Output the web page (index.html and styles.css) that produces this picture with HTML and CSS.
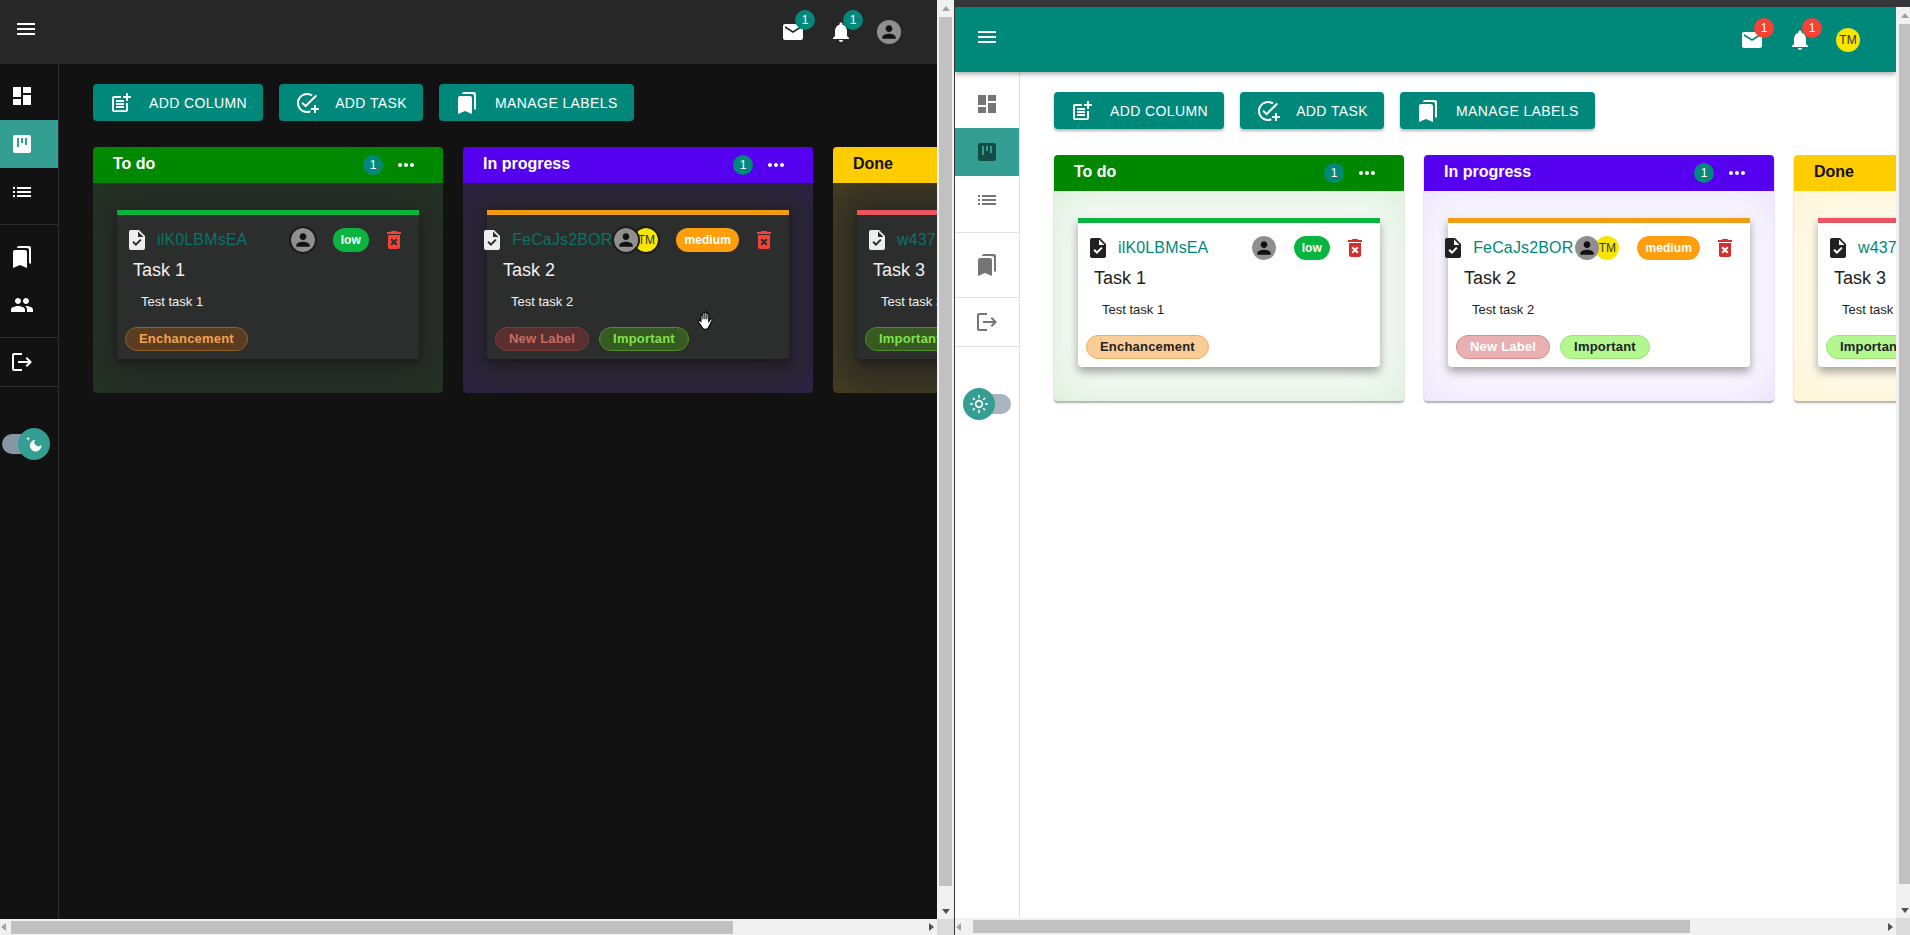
FILE: index.html
```html
<!DOCTYPE html>
<html lang="en">
<head>
<meta charset="utf-8">
<title>Kanban board</title>
<link rel="stylesheet" href="styles.css">
</head>
<body>
<svg class="defs" aria-hidden="true">
  <symbol id="i-menu" viewBox="0 0 24 24"><path d="M3 18h18v-2H3v2zm0-5h18v-2H3v2zm0-7v2h18V6H3z"/></symbol>
  <symbol id="i-dash" viewBox="0 0 24 24"><path d="M3 13h8V3H3v10zm0 8h8v-6H3v6zm10 0h8V11h-8v10zm0-18v6h8V3h-8z"/></symbol>
  <symbol id="i-kanban" viewBox="0 0 24 24"><path fill-rule="evenodd" d="M5 3h14a2 2 0 0 1 2 2v14a2 2 0 0 1-2 2H5a2 2 0 0 1-2-2V5a2 2 0 0 1 2-2zm2 3v9h2V6H7zm4 0v5h2V6h-2zm4 0v7h2V6h-2z"/></symbol>
  <symbol id="i-list" viewBox="0 0 24 24"><path d="M3 13h2v-2H3v2zm0 4h2v-2H3v2zm0-8h2V7H3v2zm4 4h14v-2H7v2zm0 4h14v-2H7v2zM7 7v2h14V7H7z"/></symbol>
  <symbol id="i-books" viewBox="0 0 24 24"><path d="M19 18l2 1V3c0-1.1-.9-2-2-2H8.99C7.89 1 7 1.9 7 3h10c1.1 0 2 .9 2 2v13zM15 5H5c-1.1 0-2 .9-2 2v16l7-3 7 3V7c0-1.1-.9-2-2-2z"/></symbol>
  <symbol id="i-people" viewBox="0 0 24 24"><path d="M16 11c1.66 0 2.99-1.34 2.99-3S17.66 5 16 5c-1.66 0-3 1.34-3 3s1.34 3 3 3zm-8 0c1.66 0 2.99-1.34 2.99-3S9.66 5 8 5C6.34 5 5 6.34 5 8s1.34 3 3 3zm0 2c-2.33 0-7 1.17-7 3.5V19h14v-2.5c0-2.33-4.67-3.5-7-3.5zm8 0c-.29 0-.62.02-.97.05 1.16.84 1.97 1.97 1.97 3.45V19h6v-2.5c0-2.33-4.67-3.5-7-3.5z"/></symbol>
  <symbol id="i-logout" viewBox="0 0 24 24"><path d="M17 7l-1.41 1.41L18.17 11H8v2h10.17l-2.58 2.58L17 17l5-5zM4 5h8V3H4c-1.1 0-2 .9-2 2v14c0 1.1.9 2 2 2h8v-2H4V5z"/></symbol>
  <symbol id="i-postadd" viewBox="0 0 24 24"><path d="M17 19.22H5V7h7V5H5c-1.1 0-2 .9-2 2v12c0 1.1.9 2 2 2h12c1.1 0 2-.9 2-2v-7h-2v7.22zM19 2h-2v3h-3v2h3v3h2V7h3V5h-3V2zM7 9h8v2H7zM7 12h8v2H7zM7 15h8v2H7z"/></symbol>
  <symbol id="i-addtask" viewBox="0 0 24 24"><path d="M22 5.18 10.59 16.6l-4.24-4.24 1.41-1.41 2.83 2.83 10-10L22 5.18zM12 20c-4.42 0-8-3.58-8-8s3.58-8 8-8c1.58 0 3.04.46 4.28 1.25l1.44-1.44C16.1 2.67 14.13 2 12 2 6.48 2 2 6.48 2 12s4.48 10 10 10c1.18 0 2.32-.21 3.37-.58v-2.13c-1.03.45-2.17.71-3.37.71zM21 14h-2v3h-3v2h3v3h2v-3h3v-2h-3v-3z"/></symbol>
  <symbol id="i-more" viewBox="0 0 24 24"><path d="M6 10c-1.1 0-2 .9-2 2s.9 2 2 2 2-.9 2-2-.9-2-2-2zm12 0c-1.1 0-2 .9-2 2s.9 2 2 2 2-.9 2-2-.9-2-2-2zm-6 0c-1.1 0-2 .9-2 2s.9 2 2 2 2-.9 2-2-.9-2-2-2z"/></symbol>
  <symbol id="i-mail" viewBox="0 0 24 24"><path fill-rule="evenodd" d="M4 4h16c1.1 0 2 .9 2 2v12c0 1.1-.9 2-2 2H4c-1.1 0-2-.9-2-2V6c0-1.1.9-2 2-2zm16 4V6l-8 5-8-5v2l8 5 8-5z"/></symbol>
  <symbol id="i-bell" viewBox="0 0 24 24"><path d="M12 22c1.1 0 2-.9 2-2h-4c0 1.1.89 2 2 2zm6-6v-5c0-3.07-1.64-5.64-4.5-6.32V4c0-.83-.67-1.5-1.5-1.5s-1.5.67-1.5 1.5v.68C7.63 5.36 6 7.92 6 11v5l-2 2v1h16v-1l-2-2z"/></symbol>
  <symbol id="i-person" viewBox="0 0 24 24"><path d="M12 12c2.21 0 4-1.79 4-4s-1.79-4-4-4-4 1.79-4 4 1.79 4 4 4zm0 2c-2.67 0-8 1.34-8 4v2h16v-2c0-2.66-5.33-4-8-4z"/></symbol>
  <symbol id="i-trash" viewBox="0 0 24 24"><path d="M6 19c0 1.1.9 2 2 2h8c1.1 0 2-.9 2-2V7H6v12zm2.46-7.12l1.41-1.41L12 12.59l2.12-2.12 1.41 1.41L13.41 14l2.12 2.12-1.41 1.41L12 15.41l-2.12 2.12-1.41-1.41L10.59 14l-2.13-2.12zM15.5 4l-1-1h-5l-1 1H5v2h14V4z"/></symbol>
  <symbol id="i-task" viewBox="0 0 24 24"><path d="M14 2H6c-1.1 0-1.99.9-1.99 2L4 20c0 1.1.89 2 1.99 2H18c1.1 0 2-.9 2-2V8l-6-6zm-3.06 16L7.4 14.46l1.41-1.41 2.12 2.12 4.24-4.24 1.41 1.41L10.94 18zM13 9V3.5L18.5 9H13z"/></symbol>
  <symbol id="i-moon" viewBox="0 0 24 24"><path d="M13.5 7a7 7 0 1 0 7.4 5.8 4.7 4.7 0 0 1-7.4-5.8zM5 3l.7 2 2 .7-2 .7-.7 2-.7-2-2-.7 2-.7z"/></symbol>
  <symbol id="i-sun" viewBox="0 0 24 24"><path d="M12 9c1.65 0 3 1.35 3 3s-1.35 3-3 3-3-1.35-3-3 1.35-3 3-3m0-2c-2.76 0-5 2.24-5 5s2.24 5 5 5 5-2.24 5-5-2.24-5-5-5zM2 13h2c.55 0 1-.45 1-1s-.45-1-1-1H2c-.55 0-1 .45-1 1s.45 1 1 1zm18 0h2c.55 0 1-.45 1-1s-.45-1-1-1h-2c-.55 0-1 .45-1 1s.45 1 1 1zM11 2v2c0 .55.45 1 1 1s1-.45 1-1V2c0-.55-.45-1-1-1s-1 .45-1 1zm0 18v2c0 .55.45 1 1 1s1-.45 1-1v-2c0-.55-.45-1-1-1s-1 .45-1 1zM5.99 4.58a.996.996 0 0 0-1.41 0 .996.996 0 0 0 0 1.41l1.06 1.06c.39.39 1.03.39 1.41 0s.39-1.03 0-1.41L5.99 4.58zm12.37 12.37a.996.996 0 0 0-1.41 0 .996.996 0 0 0 0 1.41l1.06 1.06c.39.39 1.03.39 1.41 0a.996.996 0 0 0 0-1.41l-1.06-1.06zm1.06-10.96a.996.996 0 0 0 0-1.41.996.996 0 0 0-1.41 0l-1.06 1.06c-.39.39-.39 1.03 0 1.41s1.03.39 1.41 0l1.06-1.06zM7.05 18.36a.996.996 0 0 0 0-1.41.996.996 0 0 0-1.41 0l-1.06 1.06c-.39.39-.39 1.03 0 1.41s1.03.39 1.41 0l1.06-1.06z"/></symbol>
</svg>

<div class="desktop">

  <section class="pane dark">
    <div class="window">
      <header class="appbar">
        <button class="hamburger"><svg class="icon"><use href="#i-menu"/></svg></button>
        <div class="actions">
          <span class="action"><svg class="icon"><use href="#i-mail"/></svg><b class="notif">1</b></span>
          <span class="action"><svg class="icon"><use href="#i-bell"/></svg><b class="notif">1</b></span>
          <span class="action"><span class="disc grey"><svg class="icon"><use href="#i-person"/></svg></span></span>
        </div>
      </header>
      <div class="body">
        <nav class="side">
          <a class="nav"><svg class="icon"><use href="#i-dash"/></svg></a>
          <a class="nav on"><svg class="icon"><use href="#i-kanban"/></svg></a>
          <a class="nav"><svg class="icon"><use href="#i-list"/></svg></a>
          <hr class="rule spaced">
          <a class="nav"><svg class="icon"><use href="#i-books"/></svg></a>
          <a class="nav"><svg class="icon"><use href="#i-people"/></svg></a>
          <hr class="rule after">
          <a class="nav"><svg class="icon"><use href="#i-logout"/></svg></a>
          <hr class="rule">
          <div class="toggle"><span class="knob"><svg class="icon"><use href="#i-moon"/></svg></span></div>
        </nav>
        <main class="main">
          <div class="toolbar">
            <button class="btn"><svg class="icon"><use href="#i-postadd"/></svg>ADD COLUMN</button>
            <button class="btn"><svg class="icon"><use href="#i-addtask"/></svg>ADD TASK</button>
            <button class="btn"><svg class="icon"><use href="#i-books"/></svg>MANAGE LABELS</button>
          </div>
          <div class="board">
            <article class="col green">
              <div class="col-head"><h3>To do</h3><span class="count">1</span><svg class="icon"><use href="#i-more"/></svg></div>
              <div class="col-body">
                <div class="card bar-green">
                  <div class="row">
                    <div class="code"><svg class="icon"><use href="#i-task"/></svg><span>ilK0LBMsEA</span></div>
                    <div class="people"><span class="disc grey ring"><svg class="icon"><use href="#i-person"/></svg></span></div>
                    <span class="prio low">low</span>
                    <svg class="icon trash"><use href="#i-trash"/></svg>
                  </div>
                  <h4>Task 1</h4>
                  <p>Test task 1</p>
                  <div class="labels"><span class="chip orange">Enchancement</span></div>
                </div>
              </div>
            </article>
            <article class="col purple">
              <div class="col-head"><h3>In progress</h3><span class="count">1</span><svg class="icon"><use href="#i-more"/></svg></div>
              <div class="col-body">
                <div class="card bar-orange">
                  <div class="row">
                    <div class="code"><svg class="icon"><use href="#i-task"/></svg><span>FeCaJs2BOR</span></div>
                    <div class="people"><span class="disc grey ring"><svg class="icon"><use href="#i-person"/></svg></span><span class="disc yellow ring">TM</span></div>
                    <span class="prio medium">medium</span>
                    <svg class="icon trash"><use href="#i-trash"/></svg>
                  </div>
                  <h4>Task 2</h4>
                  <p>Test task 2</p>
                  <div class="labels"><span class="chip red">New Label</span><span class="chip lime">Important</span></div>
                  <svg class="cursor" viewBox="0 0 16 18"><path d="M3.5 9.5V4.2c0-1.2 1.7-1.2 1.7 0V7.5V2.2c0-1.2 1.8-1.2 1.8 0V7.5V1.7c0-1.2 1.8-1.2 1.8 0V7.5V3c0-1.2 1.7-1.2 1.7 0v6.5l1.4-2c.8-1 2.2-.2 1.6.9l-2.7 5.6c-.6 1.3-1.4 2.5-2.8 2.5H7.2c-1.5 0-2.4-1-3-2.2L1.1 9.8c-.5-1 .8-1.8 1.5-.9z"/></svg>
                </div>
              </div>
            </article>
            <article class="col amber">
              <div class="col-head"><h3>Done</h3><span class="count">1</span><svg class="icon"><use href="#i-more"/></svg></div>
              <div class="col-body">
                <div class="card bar-red">
                  <div class="row">
                    <div class="code"><svg class="icon"><use href="#i-task"/></svg><span>w437</span></div>
                  </div>
                  <h4>Task 3</h4>
                  <p>Test task 3</p>
                  <div class="labels"><span class="chip lime">Important</span></div>
                </div>
              </div>
            </article>
          </div>
        </main>
      </div>
    </div>
    <div class="vbar"><i class="arrow up"></i><i class="vthumb"></i><i class="arrow down"></i></div>
    <div class="hbar"><i class="arrow left"></i><i class="hthumb"></i><i class="arrow right"></i></div>
    <div class="corner"></div>
  </section>

  <section class="pane light">
    <div class="window">
      <header class="appbar">
        <button class="hamburger"><svg class="icon"><use href="#i-menu"/></svg></button>
        <div class="actions">
          <span class="action"><svg class="icon"><use href="#i-mail"/></svg><b class="notif">1</b></span>
          <span class="action"><svg class="icon"><use href="#i-bell"/></svg><b class="notif">1</b></span>
          <span class="action"><span class="disc yellow">TM</span></span>
        </div>
      </header>
      <div class="body">
        <nav class="side">
          <a class="nav"><svg class="icon"><use href="#i-dash"/></svg></a>
          <a class="nav on"><svg class="icon"><use href="#i-kanban"/></svg></a>
          <a class="nav"><svg class="icon"><use href="#i-list"/></svg></a>
          <hr class="rule spaced">
          <a class="nav"><svg class="icon"><use href="#i-books"/></svg></a>
          <hr class="rule after">
          <a class="nav"><svg class="icon"><use href="#i-logout"/></svg></a>
          <hr class="rule">
          <div class="toggle"><span class="knob"><svg class="icon"><use href="#i-sun"/></svg></span></div>
        </nav>
        <main class="main">
          <div class="toolbar">
            <button class="btn"><svg class="icon"><use href="#i-postadd"/></svg>ADD COLUMN</button>
            <button class="btn"><svg class="icon"><use href="#i-addtask"/></svg>ADD TASK</button>
            <button class="btn"><svg class="icon"><use href="#i-books"/></svg>MANAGE LABELS</button>
          </div>
          <div class="board">
            <article class="col green">
              <div class="col-head"><h3>To do</h3><span class="count">1</span><svg class="icon"><use href="#i-more"/></svg></div>
              <div class="col-body">
                <div class="card bar-green">
                  <div class="row">
                    <div class="code"><svg class="icon"><use href="#i-task"/></svg><span>ilK0LBMsEA</span></div>
                    <div class="people"><span class="disc grey ring"><svg class="icon"><use href="#i-person"/></svg></span></div>
                    <span class="prio low">low</span>
                    <svg class="icon trash"><use href="#i-trash"/></svg>
                  </div>
                  <h4>Task 1</h4>
                  <p>Test task 1</p>
                  <div class="labels"><span class="chip orange">Enchancement</span></div>
                </div>
              </div>
            </article>
            <article class="col purple">
              <div class="col-head"><h3>In progress</h3><span class="count">1</span><svg class="icon"><use href="#i-more"/></svg></div>
              <div class="col-body">
                <div class="card bar-orange">
                  <div class="row">
                    <div class="code"><svg class="icon"><use href="#i-task"/></svg><span>FeCaJs2BOR</span></div>
                    <div class="people"><span class="disc grey ring"><svg class="icon"><use href="#i-person"/></svg></span><span class="disc yellow ring">TM</span></div>
                    <span class="prio medium">medium</span>
                    <svg class="icon trash"><use href="#i-trash"/></svg>
                  </div>
                  <h4>Task 2</h4>
                  <p>Test task 2</p>
                  <div class="labels"><span class="chip red">New Label</span><span class="chip lime">Important</span></div>
                </div>
              </div>
            </article>
            <article class="col amber">
              <div class="col-head"><h3>Done</h3><span class="count">1</span><svg class="icon"><use href="#i-more"/></svg></div>
              <div class="col-body">
                <div class="card bar-red">
                  <div class="row">
                    <div class="code"><svg class="icon"><use href="#i-task"/></svg><span>w437</span></div>
                  </div>
                  <h4>Task 3</h4>
                  <p>Test task 3</p>
                  <div class="labels"><span class="chip lime">Important</span></div>
                </div>
              </div>
            </article>
          </div>
        </main>
      </div>
    </div>
    <div class="vbar"><i class="arrow up"></i><i class="vthumb"></i><i class="arrow down"></i></div>
    <div class="hbar"><i class="arrow left"></i><i class="hthumb"></i><i class="arrow right"></i></div>
    <div class="corner"></div>
  </section>

</div>
</body>
</html>
```
FILE: styles.css
```css
* { box-sizing: border-box; }
html, body { margin: 0; height: 100%; overflow: hidden; }
body { font-family: "Liberation Sans", Arial, sans-serif; background: #35363a; }
.defs { display: none; }
.icon { width: 24px; height: 24px; fill: currentColor; flex: none; display: block; }

.desktop { display: grid; grid-template-columns: 954px 956px; height: 935px; }

/* a browser window: content plus scrollbars */
.pane { display: grid; min-width: 0; height: 935px; }
.pane.dark {
  grid-template-columns: 937px 17px; grid-template-rows: 919px 16px;
  --page: #121212; --bar: #272727; --bar-fg: #fff; --rule: #2e2e2e;
  --nav: #fff; --nav-on: #fff; --card: #2c2e2d; --title: #f0f0f0;
  --code: #0a7267; --file: #eee; --trash: #f44336; --ring: #1c1c1c;
  --badge: #00897b; --track: #8796a5; --col-base: #262826;
  --card-shadow: 0 4px 8px rgba(0,0,0,.35); --col-shadow: none; --bar-shadow: none;
  --btn-shadow: none;
  --chip-o-bg: #5a3c20; --chip-o-bd: #94601f; --chip-o-fg: #f2a24f;
  --chip-r-bg: #5a2f2f; --chip-r-bd: #7e3b3b; --chip-r-fg: #c96b65;
  --chip-l-bg: #375a22; --chip-l-bd: #4d8f20; --chip-l-fg: #7fe24a;
  --green-fill: transparent; --purple-fill: rgba(85,0,238,.03); --amber-fill: rgba(255,160,0,.02);
  --green-edge: rgba(0,136,0,.16); --purple-edge: rgba(85,0,238,.18); --amber-edge: rgba(255,190,0,.18);
}
.pane.light {
  grid-template-columns: 941px 15px; grid-template-rows: 918px 17px;
  border-left: 1px solid #35363a;
  --page: #fff; --bar: #00897b; --bar-fg: #fff; --rule: #e0e0e0;
  --nav: #757575; --nav-on: #154c46; --card: #fff; --title: #222;
  --code: #00897b; --file: #212121; --trash: #d32f2f; --ring: transparent;
  --badge: #f44336; --track: #aab4be; --col-base: #fff;
  --card-shadow: 0 5px 10px rgba(0,0,0,.35); --col-shadow: 0 2px 2px rgba(0,0,0,.32);
  --bar-shadow: 0 2px 5px rgba(0,0,0,.35);
  --btn-shadow: 0 2px 3px rgba(0,0,0,.3);
  --chip-o-bg: #f9cd95; --chip-o-bd: #efae63; --chip-o-fg: #222;
  --chip-r-bg: #e8b0b0; --chip-r-bd: #dc8a8a; --chip-r-fg: #fff;
  --chip-l-bg: #b3f78f; --chip-l-bd: #9fe27c; --chip-l-fg: #222;
  --green-fill: rgba(0,136,0,.03); --purple-fill: rgba(85,0,238,.025); --amber-fill: rgba(255,204,0,.07);
  --green-edge: rgba(0,136,0,.13); --purple-edge: rgba(85,0,238,.1); --amber-edge: rgba(255,204,0,.14);
}
.window { display: flex; flex-direction: column; overflow: hidden; background: var(--page); min-width: 0; }
.pane.light .window { padding-top: 7px; background-clip: content-box; }
.pane.light .vbar { margin-top: 7px; }

/* app bar */
.appbar {
  flex: none; height: 64px; display: flex; align-items: center; justify-content: space-between;
  background: var(--bar); color: var(--bar-fg); padding: 0 24px 0 14px;
  box-shadow: var(--bar-shadow); position: relative; z-index: 2;
}
.pane.light .appbar { height: 65px; padding-left: 20px; }
.hamburger { width: 24px; height: 24px; padding: 0; border: 0; background: none; color: inherit; margin-top: -6px; }
.actions { display: flex; }
.action { width: 48px; height: 24px; position: relative; display: flex; justify-content: center; }
.pane.light .action { margin-top: 1px; }
.notif {
  position: absolute; left: 26px; top: -10px; width: 20px; height: 20px; border-radius: 50%;
  background: var(--badge); color: #fff; font-size: 12px; font-weight: 400; line-height: 20px; text-align: center;
}
.disc {
  width: 24px; height: 24px; border-radius: 50%; display: flex; align-items: center; justify-content: center;
  font-size: 12px; color: #333; flex: none; overflow: hidden;
}
.disc .icon { width: 20px; height: 20px; }
.disc.grey { background: #8f8f8f; color: #111; }
.disc.yellow { background: #f7e700; }
.disc.ring { width: 28px; height: 28px; border: 2px solid var(--ring); background-clip: padding-box; }

/* side nav */
.body { flex: 1; display: flex; min-height: 0; }
.side { flex: none; width: 59px; border-right: 1px solid var(--rule); padding-top: 8px; color: var(--nav); }
.pane.light .side { width: 65px; }
.nav { height: 48px; display: flex; align-items: center; padding-left: 10px; }
.pane.light .nav { padding-left: 20px; }
.nav.on { background: #349e93; color: var(--nav-on); }
.rule { border: 0; height: 1px; background: var(--rule); margin: 0; }
.rule.spaced { margin: 8px 0; }
.rule.after { margin-top: 8px; }
.toggle {
  width: 34px; height: 20px; border-radius: 10px; background: var(--track);
  margin: 47px 0 0 2px; position: relative;
}
.pane.light .toggle { margin: 47px 0 0 22px; }
.knob {
  position: absolute; left: 16px; top: -6px; width: 32px; height: 32px; border-radius: 50%;
  background: #349e93; color: #fff; display: flex; align-items: center; justify-content: center;
}
.pane.light .knob { left: -14px; }
.knob .icon { width: 20px; height: 20px; }

/* main */
.main { flex: 1; min-width: 0; overflow: hidden; padding: 20px 0 0 34px; }
.toolbar { display: flex; gap: 16px; margin-bottom: 26px; }
.btn {
  height: 37px; padding: 0 16px; border: 0; border-radius: 4px; background: #00897b; color: #fff;
  display: flex; align-items: center; gap: 16px; font: 400 14px "Liberation Sans", Arial, sans-serif;
  letter-spacing: .4px; box-shadow: var(--btn-shadow); white-space: nowrap;
}
.board { display: flex; gap: 20px; align-items: flex-start; }

/* columns */
.col { flex: none; width: 350px; border-radius: 4px; box-shadow: var(--col-shadow); overflow: hidden; background: var(--col-base); }
.col-head {
  height: 36px; display: flex; align-items: center; padding: 0 25px 0 20px; color: #fff;
}
.col-head h3 { margin: 0 auto -1px 0; font-size: 16px; font-weight: 700; line-height: 20px; padding-bottom: 4px; }
.count {
  width: 20px; height: 20px; border-radius: 50%; background: #00897b; color: #fff;
  font-size: 12px; line-height: 20px; text-align: center; margin-right: 11px;
}
.col-body { padding: 27px 24px 34px; }
.green .col-head { background: #008800; }
.purple .col-head { background: #5500ee; }
.amber .col-head { background: #ffcc00; color: #111; }
.green .col-body { background: var(--green-fill); box-shadow: inset 0 0 50px var(--green-edge); }
.purple .col-body { background: var(--purple-fill); box-shadow: inset 0 0 50px var(--purple-edge); }
.amber .col-body { background: var(--amber-fill); box-shadow: inset 0 0 50px var(--amber-edge); }

/* cards */
.card {
  height: 149px; background: var(--card); border-top: 5px solid #000; border-radius: 0 0 4px 4px;
  box-shadow: var(--card-shadow); color: var(--title); position: relative;
}
.bar-green { border-top-color: #0ab53f; }
.bar-orange { border-top-color: #f39c12; }
.bar-red { border-top-color: #eb5561; }
.row { display: flex; align-items: center; justify-content: flex-end; height: 24px; margin-top: 13px; padding: 0 13px 0 8px; }
.code { display: flex; align-items: center; gap: 8px; margin-right: auto; font-size: 16px; letter-spacing: .15px; color: var(--code); white-space: nowrap; }
.code .icon { color: var(--file); }
.people { display: flex; margin-right: 16px; }
.people .disc + .disc { margin-left: -8px; }
.people .disc:first-child { position: relative; z-index: 1; }
.prio { height: 24px; border-radius: 12px; padding: 0 8px; font-size: 12px; line-height: 24px; font-weight: 700; letter-spacing: .1px; color: #fff; margin-right: 13px; flex: none; }
.prio.low { background: #0ab53f; }
.prio.medium { background: #ff9f0f; }
.trash { color: var(--trash); }
.card h4 { margin: 7px 0 0 16px; font-size: 18px; font-weight: 400; line-height: 22px; }
.card p { margin: 13px 0 0 24px; font-size: 13px; line-height: 15px; }
.labels { display: flex; gap: 10px; margin: 18px 0 0 8px; }
.chip {
  height: 24px; border-radius: 12px; border: 1px solid; padding: 0 13px; font-size: 13px; font-weight: 700;
  line-height: 22px; letter-spacing: .2px; white-space: nowrap; flex: none;
}
.chip.orange { background: var(--chip-o-bg); border-color: var(--chip-o-bd); color: var(--chip-o-fg); }
.chip.red { background: var(--chip-r-bg); border-color: var(--chip-r-bd); color: var(--chip-r-fg); }
.chip.lime { background: var(--chip-l-bg); border-color: var(--chip-l-bd); color: var(--chip-l-fg); }

/* the mouse pointer caught in the screenshot */
.cursor { position: absolute; left: 210px; top: 96px; width: 18px; height: 20px; fill: #fff; stroke: #000; stroke-width: 1; }

/* painted scrollbars of the two windows */
.vbar { background: #f1f1f1; display: flex; flex-direction: column; align-items: center; }
.hbar { background: #f1f1f1; display: flex; align-items: center; }
.corner { background: #dcdcdc; }
.vthumb { background: #c1c1c1; width: 13px; height: 869px; }
.hthumb { background: #c1c1c1; height: 13px; width: 722px; margin-left: 5px; }
.pane.light .vbar { align-items: flex-end; }
.pane.light .vthumb { width: 12px; height: 860px; }
.pane.light .hthumb { width: 717px; margin-left: 12px; }
.arrow { flex: none; width: 0; height: 0; border: 4px solid transparent; }
.arrow.up { border-bottom: 5px solid #a3a3a3; border-top: 0; margin: 6px 0 6px; }
.arrow.down { border-top: 5px solid #505050; border-bottom: 0; margin-top: auto; margin-bottom: 5px; }
.arrow.left { border-right: 5px solid #a3a3a3; border-left: 0; margin-left: 1px; }
.arrow.right { border-left: 5px solid #505050; border-right: 0; margin-left: auto; margin-right: 3px; }
.pane.light .arrow.up, .pane.light .arrow.down { margin-right: 2px; }
```
